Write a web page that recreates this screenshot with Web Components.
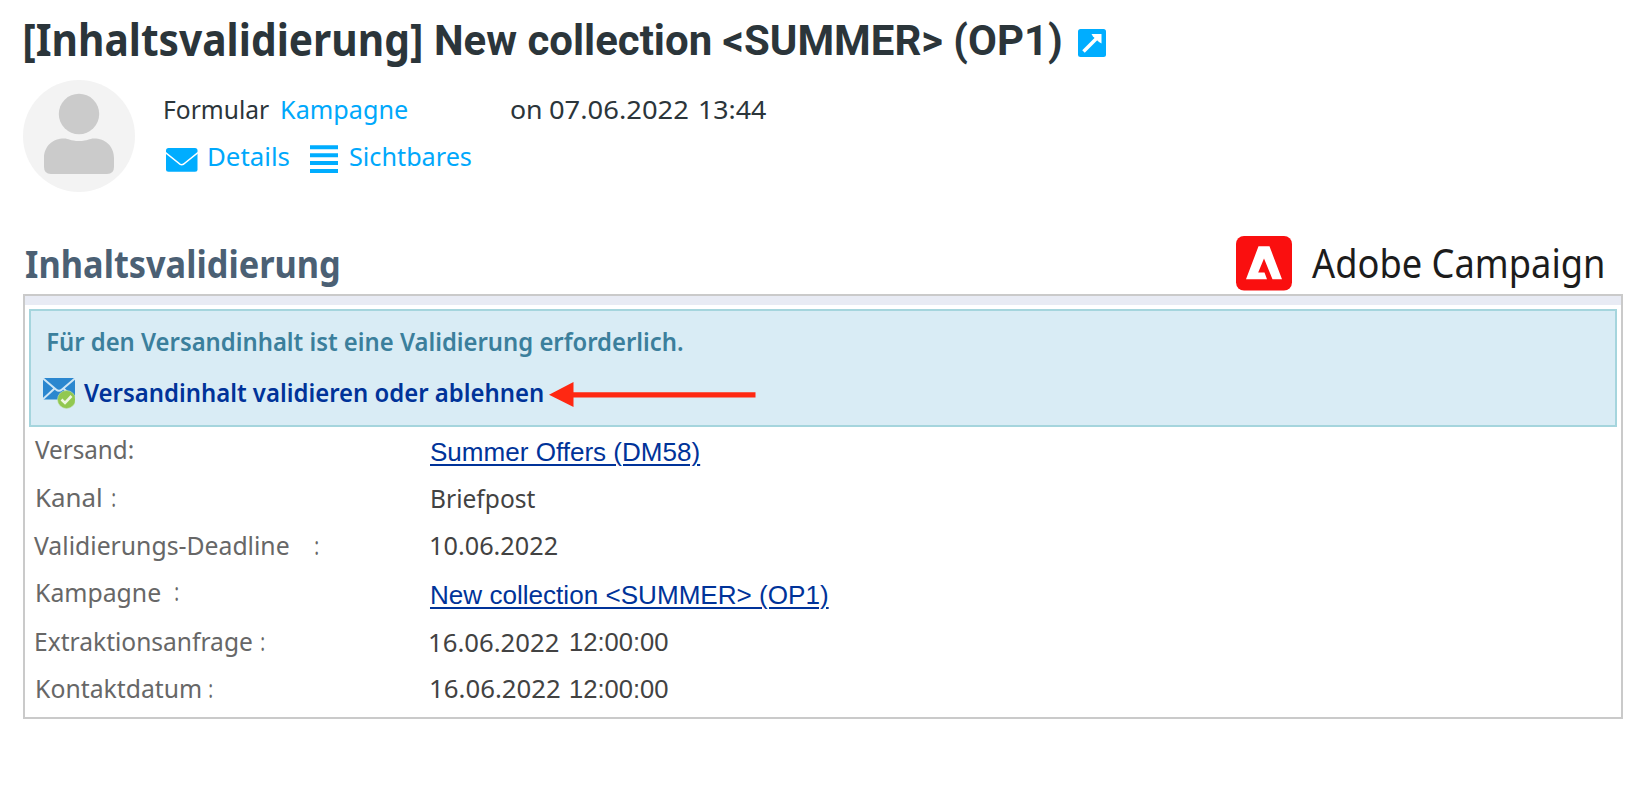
<!DOCTYPE html>
<html lang="de">
<head>
<meta charset="utf-8">
<title>Inhaltsvalidierung</title>
<style>
body{margin:0;background:#fff;font-family:"Noto Sans","Open Sans",sans-serif;width:1636px;height:810px;overflow:hidden}
</style>
</head>
<body>
<approval-page></approval-page>
<script>
const define = (name, html, setup) => customElements.define(name, class extends HTMLElement {
  connectedCallback() {
    if (this.shadowRoot) return;
    const t = document.createElement('template');
    t.innerHTML = html;
    this.attachShadow({mode: 'open'}).append(t.content.cloneNode(true));
    if (setup) setup(this, this.shadowRoot);
  }
});

/* Text run whose ink spans exactly w pixels, on a baseline "base" pixels below the host's top. */
const ctx = document.createElement('canvas').getContext('2d');
define('fit-text', `<style>:host{display:block;flex:none;height:60px}
span{display:block;width:max-content;white-space:pre;transform-origin:0 0;line-height:60px}
:host([link]) span{text-decoration:underline;text-decoration-thickness:2px;text-underline-offset:2.5px}
</style><span><slot></slot></span>`, (el, root) => {
  const w = +el.getAttribute('w'), base = +el.getAttribute('base');
  el.style.marginLeft = (el.getAttribute('gap') || 0) + 'px';
  el.style.width = w + 'px';
  const cs = getComputedStyle(el);
  ctx.font = `${cs.fontWeight} ${cs.fontSize} ${cs.fontFamily}`;
  const m = ctx.measureText(el.textContent);
  const k = w / (m.actualBoundingBoxRight + m.actualBoundingBoxLeft);
  const span = root.querySelector('span');
  const a = Math.round(m.fontBoundingBoxAscent), d = Math.round(m.fontBoundingBoxDescent);
  const line = (60 - a - d) / 2 + a;
  span.style.transform = `translate(${m.actualBoundingBoxLeft * k}px,${base - line}px) scaleX(${k})`;
});

define('page-title', `
<style>:host{display:flex;height:80px;padding-left:25px;color:#2b353a;font-weight:700;font-size:44px;align-items:flex-start}
.name{font-family:Roboto,sans-serif;font-size:42px}
svg{margin:29px 0 0 17px;display:block}</style>
<fit-text w="396" base="56">[Inhaltsvalidierung]</fit-text>
<fit-text class="name" w="625" base="55" gap="15">New collection &lt;SUMMER&gt; (OP1)</fit-text>
<svg width="28" height="28" viewBox="0 0 28 28"><rect width="28" height="28" rx="2.5" fill="#00adff"/><path d="M5.500 22.500L18.500 9.500" stroke="#fff" stroke-width="3.600" fill="none"/><path d="M13.500 5H23.500V14.500L21 13L15 7.500Z" fill="#fff"/></svg>`);

define('user-avatar', `<style>:host{display:block;flex:none;width:112px;height:112px}</style>
<svg width="112" height="112" viewBox="0 0 112 112"><circle cx="56" cy="56" r="56" fill="#f3f3f3"/><circle cx="56" cy="34" r="20.200" fill="#cbcbcb"/><path d="M21 78C21 66 30 58.500 41 58.500C46 58.500 47 61 56 61S66 58.500 71 58.500C82 58.500 91 66 91 78V87Q91 94 84 94H28Q21 94 21 87Z" fill="#cbcbcb"/></svg>`);

define('meta-line', `<style>:host{display:flex;height:46px;align-items:flex-start;color:#2b353a;font-size:26px}</style><slot></slot>`);

define('page-meta', `
<style>:host{display:flex;height:150px;padding-left:23px}
.lines{margin-left:29px}
.b{color:#00a8fb}svg{display:block;flex:none}
.mail{margin:21.500px 0 0 1.500px}.list{margin:19px 0 0 21px}</style>
<user-avatar></user-avatar>
<div class="lines">
<meta-line><fit-text w="104.500" base="39" gap=".5">Formular</fit-text><fit-text class="b" w="125.500" base="39" gap="13">Kampagne</fit-text><fit-text w="29.500" base="39" gap="103.500">on</fit-text><fit-text w="138" base="39" gap="9">07.06.2022</fit-text><fit-text w="66.500" base="39" gap="12">13:44</fit-text></meta-line>
<meta-line class="b"><svg class="mail" width="32" height="24" viewBox="0 0 32 24"><rect width="31.500" height="23.700" rx="2.500" fill="#00adff"/><path d="M-.5 4.500L12.500 15Q15.800 18.500 19 15L32 4.500" fill="none" stroke="#fff" stroke-width="1.600"/></svg><fit-text class="b" w="80.500" base="39.700" gap="11">Details</fit-text><svg class="list" width="28" height="28" viewBox="0 0 28 28"><path d="M0 2.200H28M0 10.200H28M0 18H28M0 26H28" stroke="#00adff" stroke-width="4"/></svg><fit-text class="b" w="121.500" base="39.700" gap="11.500">Sichtbares</fit-text></meta-line>
</div>`);

define('campaign-logo', `
<style>:host{display:flex;align-items:flex-start;height:64px;margin-right:33px;color:#1c1c1c;font-size:40px}svg{display:block;margin-top:6px}</style>
<svg width="56" height="55" viewBox="0 0 56 55"><rect width="56" height="54.500" rx="8" fill="#fa0f0f"/><path fill-rule="evenodd" d="M22.500 10.300H33.500L46 43.300H36.500L28 22.400L22.200 36.600H28.500L31 43.300H10Z" fill="#fff"/></svg>
<fit-text w="291" base="48" gap="20.500">Adobe Campaign</fit-text>`);

define('section-head', `
<style>:host{display:flex;justify-content:space-between;align-items:flex-start;height:64px;padding-left:25.500px;color:#4b6074;font-size:38px;font-weight:700}
campaign-logo{font-weight:400}</style>
<fit-text w="313" base="48">Inhaltsvalidierung</fit-text><campaign-logo></campaign-logo>`);

define('approval-notice', `
<style>:host{display:block;box-sizing:border-box;height:118px;margin:4px 4px 0;border:2px solid #a5d5dd;background:#d9ecf5;font-size:26px;font-weight:600}
div{display:flex;align-items:flex-start}.msg{height:49px;color:#3b7f9c}.act{color:#003399}
svg{display:block;flex:none}.ic{margin:18px 0 0 12px}.arrow{margin:22px 0 0 6.500px}</style>
<div class="msg"><fit-text w="634.500" base="40" gap="17.300">Für den Versandinhalt ist eine Validierung erforderlich.</fit-text></div>
<div class="act"><svg class="ic" width="32" height="31" viewBox="0 0 32 31"><rect width="32" height="21.500" fill="#2b87cf"/><path d="M-.5 0L13 11.500Q16 14 19 11.500L32.500 0M-.5 21.500L11 11M32.500 21.500L21 11" fill="none" stroke="#cfe6f5" stroke-width="2"/><circle cx="23.500" cy="21.500" r="9" fill="#92c850" stroke="#c2e0b4" stroke-width=".6"/><path d="M18.500 21.500L22 25L28.500 18" fill="none" stroke="#eef7e2" stroke-width="2.600"/></svg><fit-text w="458.700" base="41.700" gap="9">Versandinhalt validieren oder ablehnen</fit-text><svg class="arrow" width="207" height="26" viewBox="0 0 207 26"><path d="M0 12.700L24.500 0V10.300H206.500V15.500H24.500V25Z" fill="#ff2812"/></svg></div>`);

define('detail-row', `
<style>:host{display:grid;grid-template-columns:405px 1fr;height:48px;font-size:26px}
div{display:flex;align-items:flex-start}.l{color:#676767}.v{color:#424242}
::slotted([link]){color:#003399;font-family:"Liberation Sans",Arial,sans-serif}
::slotted([time]){font-family:"Liberation Sans",Arial,sans-serif}</style>
<div class="l"><slot name="l"></slot></div><div class="v"><slot></slot></div>`);

define('approval-panel', `
<style>:host{display:block;box-sizing:border-box;width:1600px;height:425px;margin-left:23px;border:2px solid #cacaca}
.band{height:9px;background:#e8ebf4}</style>
<div class="band"></div><approval-notice></approval-notice>
<detail-row><fit-text slot="l" gap="10.300" w="98.300" base="32">Versand:</fit-text><fit-text link gap="1" w="268.500" base="34">Summer Offers (DM58)</fit-text></detail-row>
<detail-row><fit-text slot="l" gap="12" w="64" base="32">Kanal</fit-text><fit-text slot="l" gap="11" w="3.500" base="32">:</fit-text><fit-text gap="2" w="103" base="33">Briefpost</fit-text></detail-row>
<detail-row><fit-text slot="l" gap="9" w="255" base="32">Validierungs-Deadline</fit-text><fit-text slot="l" gap="26" w="3.500" base="32">:</fit-text><fit-text gap=".7" w="126.300" base="32">10.06.2022</fit-text></detail-row>
<detail-row><fit-text slot="l" gap="11.500" w="123.500" base="31">Kampagne</fit-text><fit-text slot="l" gap="15" w="3.500" base="30">:</fit-text><fit-text link gap="1.700" w="396" base="33">New collection &lt;SUMMER&gt; (OP1)</fit-text></detail-row>
<detail-row><fit-text slot="l" gap="10.800" w="216.200" base="32">Extraktionsanfrage</fit-text><fit-text slot="l" gap="9.200" w="3.500" base="32">:</fit-text><fit-text gap="0" w="128.500" base="32.700">16.06.2022</fit-text><fit-text time gap="11" w="98" base="32">12:00:00</fit-text></detail-row>
<detail-row><fit-text slot="l" gap="11.500" w="164" base="30.700">Kontaktdatum</fit-text><fit-text slot="l" gap="8" w="3.500" base="30.700">:</fit-text><fit-text gap=".5" w="129" base="31">16.06.2022</fit-text><fit-text time gap="10" w="98" base="30.700">12:00:00</fit-text></detail-row>`);

define('approval-page', `<style>:host{display:block}</style>
<page-title></page-title><page-meta></page-meta><section-head></section-head><approval-panel></approval-panel>`);
</script>
</body>
</html>
